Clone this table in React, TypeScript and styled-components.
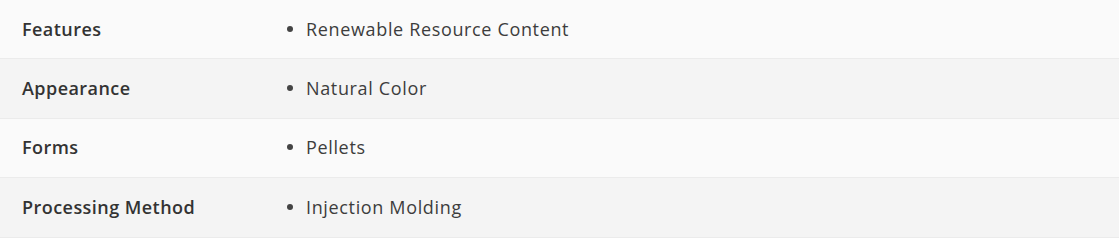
import styled, { createGlobalStyle } from "styled-components";

const GlobalStyle = createGlobalStyle`
  html, body {
    margin: 0;
    padding: 0;
    background: #ffffff;
  }
`;

const Table = styled.div`
  width: 1119px;
  font-family: "Open Sans", "Liberation Sans", sans-serif;
`;

const Row = styled.div<{ striped: boolean }>`
  box-sizing: border-box;
  display: grid;
  grid-template-columns: 284px 1fr;
  align-items: center;
  height: 59.4px;
  padding-bottom: 1px;
  background: ${(props) => (props.striped ? "#f4f4f4" : "#fafafa")};
  border-bottom: 1px solid #ebebeb;
`;

const Label = styled.div`
  padding-left: 22px;
  font-size: 18px;
  font-weight: 600;
  letter-spacing: 0.45px;
  color: #333333;
`;

const Values = styled.ul`
  margin: 0;
  padding: 0;
  list-style: none;
`;

const Value = styled.li`
  display: flex;
  align-items: center;
  font-size: 18px;
  letter-spacing: 0.65px;
  color: #3d3d3d;

  &::before {
    content: "";
    width: 6px;
    height: 6px;
    border-radius: 50%;
    background: #444444;
    margin-left: 3px;
    margin-right: 13px;
  }
`;

interface Spec {
  label: string;
  values: string[];
}

const specs: Spec[] = [
  { label: "Features", values: ["Renewable Resource Content"] },
  { label: "Appearance", values: ["Natural Color"] },
  { label: "Forms", values: ["Pellets"] },
  { label: "Processing Method", values: ["Injection Molding"] },
];

const App = () => {
  return (
    <>
      <GlobalStyle />
      <Table>
        {specs.map((spec, i) => (
          <Row key={spec.label} striped={i % 2 === 1}>
            <Label>{spec.label}</Label>
            <Values>
              {spec.values.map((v) => (
                <Value key={v}>{v}</Value>
              ))}
            </Values>
          </Row>
        ))}
      </Table>
    </>
  );
};

export default App;
